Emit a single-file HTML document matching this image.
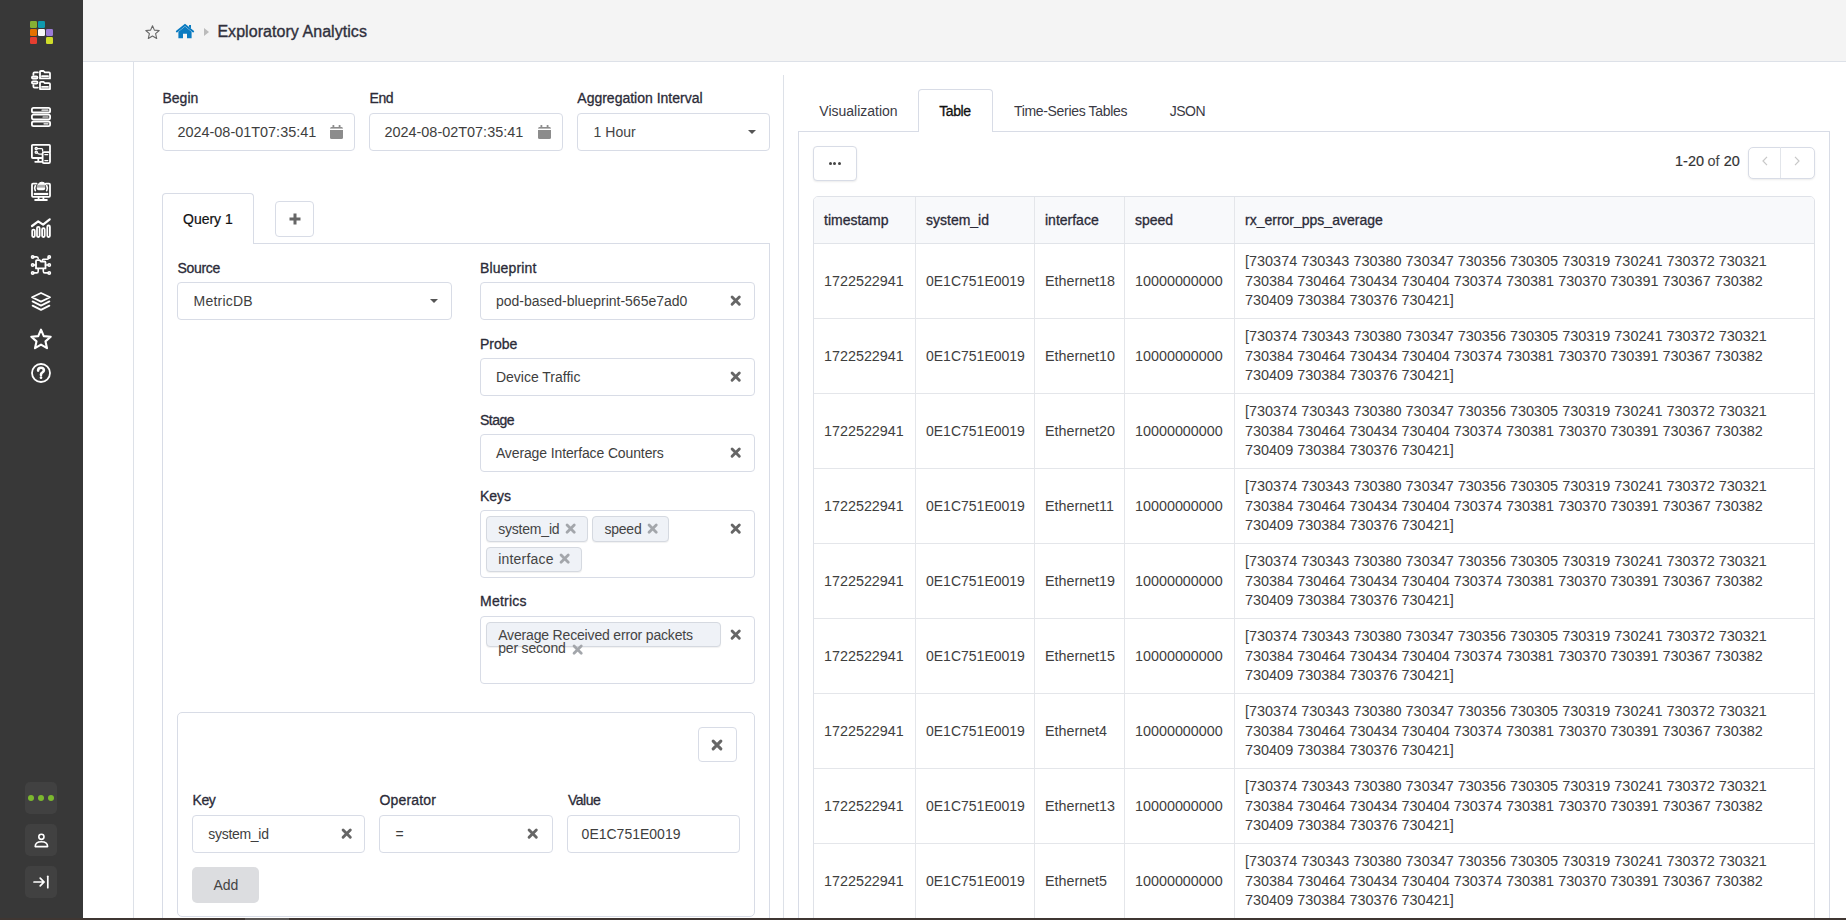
<!DOCTYPE html>
<html><head><meta charset="utf-8"><style>
*{box-sizing:border-box;margin:0;padding:0}
html,body{width:1846px;height:920px;overflow:hidden;background:#fff;font-family:"Liberation Sans",sans-serif;font-size:14px;color:#333}
.a{position:absolute}
.t{position:absolute;white-space:nowrap;line-height:14px;font-size:14px;color:#3e3e3e}
.lb{position:absolute;white-space:nowrap;line-height:14px;font-size:14px;color:#2b2b38;-webkit-text-stroke:0.3px #2b2b38}
.bx{position:absolute;border:1px solid #d8dce6;border-radius:4px;background:#fff}
.tag{position:absolute;border:1px solid #d5d9e0;border-radius:4px;background:#eff2f7;box-shadow:0 1px 1px rgba(0,0,0,0.06)}
svg{position:absolute;overflow:visible}
</style></head><body>
<div class="a" style="left:0px;top:0px;width:83px;height:918px;background:#383838;"></div>
<div class="a" style="left:30px;top:21px;width:7px;height:7px;background:#86b034;border-radius:1.2px"></div>
<div class="a" style="left:38px;top:21px;width:7px;height:7px;background:#0f9aae;border-radius:1.2px"></div>
<div class="a" style="left:30px;top:29px;width:7px;height:7px;background:#e57200;border-radius:1.2px"></div>
<div class="a" style="left:38px;top:29px;width:7px;height:7px;background:#f8f8f8;border-radius:1.2px"></div>
<div class="a" style="left:46px;top:29px;width:7px;height:7px;background:#9b7bd6;border-radius:1.2px"></div>
<div class="a" style="left:30px;top:37px;width:7px;height:7px;background:#e53e30;border-radius:1.2px"></div>
<div class="a" style="left:46px;top:37px;width:7px;height:7px;background:#cfdc2a;border-radius:1.2px"></div>
<svg style="left:31px;top:70px" width="20" height="20" viewBox="0 0 20 20" fill="none" stroke="#fff" stroke-width="1.8" stroke-linejoin="round" stroke-linecap="round"><path d="M9 8.4V1.9Q9 1 10 1H12.5L13.8 2.4H18Q19 2.4 19 3.4V8.4Z"/><path d="M9 19.1V12.6Q9 11.8 10 11.8H12.5L13.8 13.1H18Q19 13.1 19 14.1V19.1Z"/><path d="M11 6.2H17"/><path d="M11 16.9H17"/><rect x="0.9" y="6.5" width="5.6" height="2.2" rx="1.1"/><rect x="0.9" y="11.4" width="5.6" height="2.2" rx="1.1"/><path d="M2.4 4.8V3.5Q2.4 2.4 3.5 2.4H6.8"/><path d="M2.4 15.2V16.5Q2.4 17.6 3.5 17.6H6.8"/></svg>
<svg style="left:31px;top:107px" width="20" height="20" viewBox="0 0 20 20" fill="none" stroke="#fff" stroke-width="1.8" stroke-linejoin="round" stroke-linecap="round"><rect x="0.9" y="0.9" width="18.2" height="4.6" rx="1.6"/><rect x="0.9" y="7.7" width="18.2" height="4.6" rx="1.6"/><rect x="0.9" y="14.5" width="18.2" height="4.6" rx="1.6"/><path d="M11 3.2H17M12 10H17M13 16.8H17" stroke-width="1.2"/></svg>
<svg style="left:31px;top:144px" width="20" height="20" viewBox="0 0 20 20" fill="none" stroke="#fff" stroke-width="1.8" stroke-linejoin="round" stroke-linecap="round"><path d="M10.5 14H1.8Q0.9 14 0.9 13.1V1.8Q0.9 0.9 1.8 0.9H18.1Q19 0.9 19 1.8V8"/><path d="M4.2 17.8H10.5M7.3 14.5V17.5"/><rect x="11.6" y="8.2" width="7.4" height="10.9" rx="1.3"/><path d="M13.8 10.6H16.8M13.8 16.6H16.8" stroke-width="1.2"/><circle cx="5.2" cy="4.6" r="1.1" stroke-width="1.3"/><circle cx="5.2" cy="8.3" r="1.1" stroke-width="1.3"/><path d="M6.3 4.6H10.6Q11.6 4.6 11.6 5.6V7M6.3 8.3Q6.8 10.2 8.6 10.2H11" stroke-width="1.3"/></svg>
<svg style="left:31px;top:181px" width="20" height="20" viewBox="0 0 20 20" fill="none" stroke="#fff" stroke-width="1.8" stroke-linejoin="round" stroke-linecap="round"><path d="M5.6 2.7H2Q1 2.7 1 3.7V14.8Q1 15.8 2 15.8H18Q19 15.8 19 14.8V3.7Q19 2.7 18 2.7H14.8"/><path d="M4.2 19.1H15.8" stroke-width="2"/><path d="M7.6 16V18.8M12.4 16V18.8" stroke-width="1.8"/><rect x="2.8" y="11.9" width="14.4" height="2.2" fill="#fff" stroke="none"/><path d="M7 3.4Q10.9 -1.4 14.9 3.4Z" fill="#fff" stroke-width="1"/><path d="M5.8 4.4H14.2V7.4Q14.2 9.2 12.4 9.2H7.6Q5.8 9.2 5.8 7.4Z" fill="#fff" stroke="none"/><path d="M6.2 5.9H13.8" stroke="#383838" stroke-width="0.7"/><path d="M4.3 4.8Q2.9 7.2 4.3 9.6M15.7 4.8Q17.1 7.2 15.7 9.6" stroke-width="1.7"/></svg>
<svg style="left:31px;top:218px" width="20" height="20" viewBox="0 0 20 20" fill="none" stroke="#fff" stroke-width="1.8" stroke-linejoin="round" stroke-linecap="round"><path d="M1 8L7.2 3.4L12.1 6.6L18.7 1.3" stroke-width="2.2"/><rect x="1.2" y="11.6" width="2.6" height="7.4" rx="1.2"/><rect x="6" y="8.8" width="2.6" height="10.2" rx="1.2"/><rect x="11.1" y="10.2" width="2.6" height="8.8" rx="1.2"/><rect x="16.3" y="7.5" width="2.6" height="11.5" rx="1.2"/></svg>
<svg style="left:31px;top:255px" width="20" height="20" viewBox="0 0 20 20" fill="none" stroke="#fff" stroke-width="1.8" stroke-linejoin="round" stroke-linecap="round"><path d="M5 13.4V6.1Q5 5.2 5.9 5.2H8.6L10 6.5H13.6Q14.5 6.5 14.5 7.4V13.4Z"/><circle cx="1.7" cy="1.9" r="1.2" stroke-width="1.6"/><circle cx="1.7" cy="10" r="1.2" stroke-width="1.6"/><circle cx="1.7" cy="17.9" r="1.2" stroke-width="1.6"/><circle cx="18.2" cy="1.9" r="1.2" stroke-width="1.6"/><circle cx="18.2" cy="10" r="1.2" stroke-width="1.6"/><circle cx="18.2" cy="17.9" r="1.2" stroke-width="1.6"/><path d="M2.5 1.9H5.6Q7.2 1.9 7.2 3.6M2.5 10H5M14.5 10H17.4M17.4 2.5V3.6Q17.4 4.2 16.5 4.2H12.3Q11.4 4.2 11.4 5.2M2.5 17.9H5.6Q7.2 17.9 7.2 16.2V14M12.3 14V16.2Q12.3 17.9 13.9 17.9H17.4" stroke-width="1.6"/></svg>
<svg style="left:31px;top:292px" width="20" height="20" viewBox="0 0 20 20" fill="none" stroke="#fff" stroke-width="1.8" stroke-linejoin="round" stroke-linecap="round"><path d="M10 1L19 5.3L10 9.6L1 5.3Z"/><path d="M1.6 9.4L10 13.6L18.4 9.4"/><path d="M1.6 13.6L10 17.9L18.4 13.6"/></svg>
<svg style="left:31px;top:329px" width="20" height="20" viewBox="0 0 20 20" fill="none" stroke="#fff" stroke-width="1.8" stroke-linejoin="round" stroke-linecap="round"><path d="M10.00 0.70L12.76 7.10L19.70 7.75L14.47 12.35L16.00 19.15L10.00 15.60L4.00 19.15L5.53 12.35L0.30 7.75L7.24 7.10Z" stroke-width="2.1"/></svg>
<svg style="left:31px;top:363px" width="20" height="20" viewBox="0 0 20 20" fill="none" stroke="#fff" stroke-width="1.8" stroke-linejoin="round" stroke-linecap="round"><circle cx="10" cy="10" r="9" stroke-width="1.8"/><path d="M7.1 7.6Q7.1 4.8 10 4.8Q12.9 4.8 12.9 7.3Q12.9 8.8 11.2 9.6Q10 10.2 10 11.6V12" stroke-width="2.6"/><circle cx="10" cy="14.7" r="1.35" fill="#fff" stroke="none"/></svg>
<div class="a" style="left:25px;top:782px;width:32px;height:32px;background:#414141;border-radius:5px"></div>
<div class="a" style="left:25px;top:824px;width:32px;height:32px;background:#414141;border-radius:5px"></div>
<div class="a" style="left:25px;top:866px;width:32px;height:32px;background:#414141;border-radius:5px"></div>
<div class="a" style="left:28px;top:795px;width:6px;height:6px;border-radius:50%;background:#7cb82f"></div>
<div class="a" style="left:38px;top:795px;width:6px;height:6px;border-radius:50%;background:#7cb82f"></div>
<div class="a" style="left:48px;top:795px;width:6px;height:6px;border-radius:50%;background:#7cb82f"></div>
<svg style="left:33px;top:832px" width="16" height="16" viewBox="0 0 16 16" fill="none" stroke="#fff" stroke-width="1.6"><circle cx="8.4" cy="4.8" r="2.6"/><path d="M2.2 14.6Q2.2 9.8 8.4 9.8Q14.6 9.8 14.6 14.6Z" stroke-linejoin="round"/></svg>
<svg style="left:33px;top:874px" width="16" height="16" viewBox="0 0 16 16" fill="none" stroke="#fff" stroke-width="1.7" stroke-linecap="round"><path d="M1 8H11M7.2 4.2L11 8L7.2 11.8"/><path d="M14.8 2.3V13.7"/></svg>
<div class="a" style="left:83px;top:0px;width:1763px;height:61px;background:#f4f4f4;"></div>
<div class="a" style="left:83px;top:61px;width:1763px;height:1px;background:#dde1e8;"></div>
<svg style="left:145px;top:24.5px" width="15" height="15" viewBox="0 0 15 15" fill="none" stroke="#666" stroke-width="1.1" stroke-linejoin="round"><path d="M7.5 0.8L9.4 5.1L14.2 5.5L10.6 8.7L11.7 13.5L7.5 11L3.3 13.5L4.4 8.7L0.8 5.5L5.6 5.1Z"/></svg>
<svg style="left:175.5px;top:23.5px" width="18" height="15" viewBox="0 0 18 15"><path d="M0.8 7.4L9 0.9L17.2 7.4" fill="none" stroke="#0a7bc1" stroke-width="1.9" stroke-linecap="round"/><path d="M13 1.1H15V4.6L13 3Z" fill="#0a7bc1"/><path d="M2.4 7.8L9 2.6L15.6 7.8V14.3H11V9.8H7V14.3H2.4Z" fill="#0a7bc1"/></svg>
<svg style="left:204px;top:27.7px" width="5" height="8" viewBox="0 0 5 8"><path d="M0 0L5 4L0 8Z" fill="#bbb"/></svg>
<div class="t" style="left:217.4px;top:24.06px;font-size:16px;line-height:16px;color:#30303c;-webkit-text-stroke:0.35px #30303c;letter-spacing:0.05px">Exploratory Analytics</div>
<div class="a" style="left:133px;top:62px;width:1px;height:856px;background:#dde1e8;"></div>
<div class="lb" style="left:162.5px;top:91.35px;font-size:14px;line-height:14px;">Begin</div>
<div class="lb" style="left:369.5px;top:91.35px;font-size:14px;line-height:14px;letter-spacing:-0.4px">End</div>
<div class="lb" style="left:577.3px;top:91.35px;font-size:14px;line-height:14px;">Aggregation Interval</div>
<div class="bx" style="left:162px;top:113px;width:193px;height:38px;"></div>
<div class="bx" style="left:369px;top:113px;width:194px;height:38px;"></div>
<div class="bx" style="left:577px;top:113px;width:193px;height:38px;"></div>
<div class="t" style="left:177.4px;top:124.57px;font-size:14.45px;line-height:14.45px;">2024-08-01T07:35:41</div>
<div class="t" style="left:384.4px;top:124.57px;font-size:14.45px;line-height:14.45px;">2024-08-02T07:35:41</div>
<div class="t" style="left:593.6px;top:124.95px;font-size:14px;line-height:14px;color:#444;">1 Hour</div>
<svg style="left:330px;top:125px" width="13" height="14" viewBox="0 0 13 14"><rect x="0" y="2" width="13" height="12" rx="1.5" fill="#8c8c8c"/><rect x="2.5" y="0" width="1.8" height="3.5" rx="0.6" fill="#8c8c8c"/><rect x="8.7" y="0" width="1.8" height="3.5" rx="0.6" fill="#8c8c8c"/><rect x="0" y="3.6" width="13" height="1.4" fill="#fff"/></svg>
<svg style="left:537.5px;top:125px" width="13" height="14" viewBox="0 0 13 14"><rect x="0" y="2" width="13" height="12" rx="1.5" fill="#8c8c8c"/><rect x="2.5" y="0" width="1.8" height="3.5" rx="0.6" fill="#8c8c8c"/><rect x="8.7" y="0" width="1.8" height="3.5" rx="0.6" fill="#8c8c8c"/><rect x="0" y="3.6" width="13" height="1.4" fill="#fff"/></svg>
<svg style="left:747.5px;top:129.8px" width="8" height="4" viewBox="0 0 8 4"><path d="M0 0H8L4 4Z" fill="#555"/></svg>
<div class="a" style="left:783px;top:75px;width:1px;height:843px;background:#dde1e8;"></div>
<div class="a" style="left:162px;top:193px;width:92px;height:51px;border:1px solid #d8dce6;border-bottom:none;border-radius:4px 4px 0 0;background:#fff;z-index:2"></div>
<div class="t" style="left:183px;top:212.05px;font-size:14px;line-height:14px;color:#111;z-index:3;-webkit-text-stroke:0.2px #111">Query 1</div>
<div class="bx" style="left:275px;top:201px;width:39px;height:36px;"></div>
<svg style="left:288.5px;top:212.5px" width="12" height="12" viewBox="0 0 12 12"><path d="M6 0.5V11.5M0.5 6H11.5" stroke="#666" stroke-width="3"/></svg>
<div class="a" style="left:162px;top:243px;width:608px;height:700px;border:1px solid #d8dce6;background:#fff;z-index:1"></div>
<div class="lb" style="left:177.5px;top:260.95px;font-size:14px;line-height:14px;z-index:5;letter-spacing:-0.33px;">Source</div>
<div class="lb" style="left:480px;top:260.95px;font-size:14px;line-height:14px;z-index:5;letter-spacing:0.13px;">Blueprint</div>
<div class="bx" style="left:177px;top:282px;width:275px;height:38px;z-index:4;"></div>
<div class="bx" style="left:480px;top:282px;width:275px;height:38px;z-index:4;"></div>
<div class="t" style="left:193.6px;top:294.15px;font-size:14px;line-height:14px;z-index:5;letter-spacing:0.2px">MetricDB</div>
<svg style="left:430px;top:299px;z-index:6" width="8" height="4" viewBox="0 0 8 4"><path d="M0 0H8L4 4Z" fill="#555"/></svg>
<div class="t" style="left:495.9px;top:294.15px;font-size:14px;line-height:14px;z-index:5;">pod-based-blueprint-565e7ad0</div>
<svg style="left:731.3px;top:295.7px;z-index:6" width="9.4" height="9.4" viewBox="0 0 9.4 9.4"><path d="M1.0875 1.0875L8.3125 8.3125M8.3125 1.0875L1.0875 8.3125" stroke="#666" stroke-width="2.9" stroke-linecap="round"/></svg>
<div class="lb" style="left:480px;top:337.15px;font-size:14px;line-height:14px;z-index:5;letter-spacing:0px;">Probe</div>
<div class="bx" style="left:480px;top:358px;width:275px;height:38px;z-index:4;"></div>
<div class="t" style="left:495.9px;top:370.15px;font-size:14px;line-height:14px;z-index:5;">Device Traffic</div>
<svg style="left:731.3px;top:371.7px;z-index:6" width="9.4" height="9.4" viewBox="0 0 9.4 9.4"><path d="M1.0875 1.0875L8.3125 8.3125M8.3125 1.0875L1.0875 8.3125" stroke="#666" stroke-width="2.9" stroke-linecap="round"/></svg>
<div class="lb" style="left:480px;top:413.15px;font-size:14px;line-height:14px;z-index:5;letter-spacing:-0.5px;">Stage</div>
<div class="bx" style="left:480px;top:434px;width:275px;height:38px;z-index:4;"></div>
<div class="t" style="left:495.9px;top:446.15px;font-size:14px;line-height:14px;z-index:5;letter-spacing:-0.12px">Average Interface Counters</div>
<svg style="left:731.3px;top:447.7px;z-index:6" width="9.4" height="9.4" viewBox="0 0 9.4 9.4"><path d="M1.0875 1.0875L8.3125 8.3125M8.3125 1.0875L1.0875 8.3125" stroke="#666" stroke-width="2.9" stroke-linecap="round"/></svg>
<div class="lb" style="left:480px;top:489.15px;font-size:14px;line-height:14px;z-index:5;letter-spacing:0px;">Keys</div>
<div class="bx" style="left:480px;top:510px;width:275px;height:67.5px;z-index:4;"></div>
<div class="tag" style="left:486px;top:516px;width:101.5px;height:25.5px;z-index:5"></div>
<div class="t" style="left:498.2px;top:521.65px;font-size:14px;line-height:14px;color:#444;z-index:5;letter-spacing:-0.2px">system_id</div>
<svg style="left:566.45px;top:524.35px;z-index:6" width="9.3" height="9.3" viewBox="0 0 9.3 9.3"><path d="M1.0499999999999998 1.0499999999999998L8.25 8.25M8.25 1.0499999999999998L1.0499999999999998 8.25" stroke="#a3a6ab" stroke-width="2.8" stroke-linecap="round"/></svg>
<div class="tag" style="left:592px;top:516px;width:76.5px;height:25.5px;z-index:5"></div>
<div class="t" style="left:604.4px;top:521.65px;font-size:14px;line-height:14px;color:#444;z-index:5;letter-spacing:-0.2px">speed</div>
<svg style="left:647.75px;top:524.35px;z-index:6" width="9.3" height="9.3" viewBox="0 0 9.3 9.3"><path d="M1.0499999999999998 1.0499999999999998L8.25 8.25M8.25 1.0499999999999998L1.0499999999999998 8.25" stroke="#a3a6ab" stroke-width="2.8" stroke-linecap="round"/></svg>
<div class="tag" style="left:486px;top:546.5px;width:95.5px;height:25px;z-index:5"></div>
<div class="t" style="left:498.2px;top:551.65px;font-size:14px;line-height:14px;color:#444;z-index:5;letter-spacing:0.2px">interface</div>
<svg style="left:560.15px;top:554.35px;z-index:6" width="9.3" height="9.3" viewBox="0 0 9.3 9.3"><path d="M1.0499999999999998 1.0499999999999998L8.25 8.25M8.25 1.0499999999999998L1.0499999999999998 8.25" stroke="#a3a6ab" stroke-width="2.8" stroke-linecap="round"/></svg>
<svg style="left:731.3px;top:523.6999999999999px;z-index:6" width="9.4" height="9.4" viewBox="0 0 9.4 9.4"><path d="M1.0875 1.0875L8.3125 8.3125M8.3125 1.0875L1.0875 8.3125" stroke="#666" stroke-width="2.9" stroke-linecap="round"/></svg>
<div class="lb" style="left:480px;top:593.85px;font-size:14px;line-height:14px;z-index:5;letter-spacing:0.25px;">Metrics</div>
<div class="bx" style="left:480px;top:616px;width:275px;height:67.5px;z-index:4;"></div>
<div class="tag" style="left:486px;top:622px;width:234.5px;height:25px;z-index:5"></div>
<div class="t" style="left:498.2px;top:627.85px;font-size:14px;line-height:14px;color:#444;z-index:5;letter-spacing:-0.17px">Average Received error packets</div>
<div class="t" style="left:498.2px;top:641.45px;font-size:14px;line-height:14px;color:#444;z-index:5;letter-spacing:-0.18px">per second</div>
<svg style="left:572.75px;top:644.75px;z-index:6" width="9.3" height="9.3" viewBox="0 0 9.3 9.3"><path d="M1.0499999999999998 1.0499999999999998L8.25 8.25M8.25 1.0499999999999998L1.0499999999999998 8.25" stroke="#a3a6ab" stroke-width="2.8" stroke-linecap="round"/></svg>
<svg style="left:731.3px;top:629.9px;z-index:6" width="9.4" height="9.4" viewBox="0 0 9.4 9.4"><path d="M1.0875 1.0875L8.3125 8.3125M8.3125 1.0875L1.0875 8.3125" stroke="#666" stroke-width="2.9" stroke-linecap="round"/></svg>
<div class="bx" style="left:177px;top:712px;width:578px;height:205px;z-index:4;border-radius:5px"></div>
<div class="bx" style="left:698px;top:727px;width:39px;height:35px;z-index:4;"></div>
<svg style="left:712.1px;top:739.7px;z-index:6" width="10" height="10" viewBox="0 0 10 10"><path d="M1.1625 1.1625L8.8375 8.8375M8.8375 1.1625L1.1625 8.8375" stroke="#666" stroke-width="3.1" stroke-linecap="round"/></svg>
<div class="lb" style="left:192.5px;top:793.25px;font-size:14px;line-height:14px;z-index:5;letter-spacing:-0.4px;">Key</div>
<div class="lb" style="left:379.5px;top:793.25px;font-size:14px;line-height:14px;z-index:5;letter-spacing:0.15px;">Operator</div>
<div class="lb" style="left:568px;top:793.25px;font-size:14px;line-height:14px;z-index:5;letter-spacing:-0.5px;">Value</div>
<div class="bx" style="left:192px;top:815px;width:173px;height:38px;z-index:4;"></div>
<div class="bx" style="left:379px;top:815px;width:174px;height:38px;z-index:4;"></div>
<div class="bx" style="left:567px;top:815px;width:173px;height:38px;z-index:4;"></div>
<div class="t" style="left:208.3px;top:826.95px;font-size:14px;line-height:14px;z-index:5;letter-spacing:-0.3px">system_id</div>
<svg style="left:341.6px;top:828.8px;z-index:6" width="9.4" height="9.4" viewBox="0 0 9.4 9.4"><path d="M1.0875 1.0875L8.3125 8.3125M8.3125 1.0875L1.0875 8.3125" stroke="#666" stroke-width="2.9" stroke-linecap="round"/></svg>
<div class="t" style="left:395.5px;top:826.95px;font-size:14px;line-height:14px;z-index:5;">=</div>
<svg style="left:528.3px;top:828.8px;z-index:6" width="9.4" height="9.4" viewBox="0 0 9.4 9.4"><path d="M1.0875 1.0875L8.3125 8.3125M8.3125 1.0875L1.0875 8.3125" stroke="#666" stroke-width="2.9" stroke-linecap="round"/></svg>
<div class="t" style="left:581.6px;top:826.95px;font-size:14px;line-height:14px;z-index:5;">0E1C751E0019</div>
<div class="a" style="left:192px;top:867px;width:67px;height:36px;background:#dcdde0;border-radius:5px;z-index:5"></div>
<div class="t" style="left:213.4px;top:878.15px;font-size:14px;line-height:14px;color:#444;z-index:5;">Add</div>
<div class="a" style="left:0px;top:918px;width:1846px;height:2px;background:#3f3632;z-index:20;"></div>
<div class="a" style="left:245px;top:918px;width:44px;height:2px;background:#5b5755;z-index:21;"></div>
<div class="a" style="left:798px;top:131px;width:1032px;height:800px;border:1px solid #d8dce6;background:#fff;z-index:1"></div>
<div class="a" style="left:918px;top:89px;width:75px;height:43px;border:1px solid #d8dce6;border-bottom:none;border-radius:4px 4px 0 0;background:#fff;z-index:2"></div>
<div class="t" style="left:819.3px;top:104.05px;font-size:14px;line-height:14px;color:#3a3a44;">Visualization</div>
<div class="t" style="left:939.3px;top:104.05px;font-size:14px;line-height:14px;color:#111;z-index:3;-webkit-text-stroke:0.3px #111;letter-spacing:-0.45px">Table</div>
<div class="t" style="left:1014px;top:104.05px;font-size:14px;line-height:14px;color:#3a3a44;letter-spacing:-0.33px">Time-Series Tables</div>
<div class="t" style="left:1169.7px;top:104.05px;font-size:14px;line-height:14px;color:#3a3a44;letter-spacing:-0.5px">JSON</div>
<div class="bx" style="left:813px;top:146px;width:44px;height:35px;z-index:4;box-shadow:0 1px 2px rgba(0,0,0,0.08)"></div>
<div class="a" style="left:828.6px;top:161.9px;width:3.2px;height:3.2px;border-radius:50%;background:#444;z-index:5"></div>
<div class="a" style="left:833.1999999999999px;top:161.9px;width:3.2px;height:3.2px;border-radius:50%;background:#444;z-index:5"></div>
<div class="a" style="left:837.8px;top:161.9px;width:3.2px;height:3.2px;border-radius:50%;background:#444;z-index:5"></div>
<div class="t" style="left:1675.1px;top:153.77px;font-size:14.45px;line-height:14.45px;color:#333;z-index:5;-webkit-text-stroke:0.2px #333">1-20</div>
<div class="t" style="left:1707.6px;top:153.77px;font-size:14.45px;line-height:14.45px;color:#444;z-index:5">of</div>
<div class="t" style="left:1723.7px;top:153.77px;font-size:14.45px;line-height:14.45px;color:#333;z-index:5;-webkit-text-stroke:0.2px #333">20</div>
<div class="bx" style="left:1747.5px;top:146.5px;width:67px;height:32px;z-index:4;border-radius:5px;box-shadow:0 1px 2px rgba(0,0,0,0.08)"></div>
<div class="a" style="left:1780px;top:147px;width:1px;height:31px;background:#e2e5ea;z-index:5;"></div>
<svg style="left:1761.5px;top:156.2px;z-index:6" width="6" height="10" viewBox="0 0 6 10"><path d="M5 0.8L1 5L5 9.2" fill="none" stroke="#c8c8c8" stroke-width="1.2"/></svg>
<svg style="left:1793.5px;top:156.2px;z-index:6" width="6" height="10" viewBox="0 0 6 10"><path d="M1 0.8L5 5L1 9.2" fill="none" stroke="#c8c8c8" stroke-width="1.2"/></svg>
<div class="a" style="left:813px;top:196px;width:1002px;height:760px;border:1px solid #dfe2e8;border-radius:5px 5px 0 0;background:#fff;z-index:4"></div>
<div class="a" style="left:814px;top:197px;width:1000px;height:46px;background:#f8f9fb;border-radius:4px 4px 0 0;z-index:5"></div>
<div class="a" style="left:915px;top:197px;width:1px;height:760px;background:#e4e6ea;z-index:6;"></div>
<div class="a" style="left:1034px;top:197px;width:1px;height:760px;background:#e4e6ea;z-index:6;"></div>
<div class="a" style="left:1124px;top:197px;width:1px;height:760px;background:#e4e6ea;z-index:6;"></div>
<div class="a" style="left:1234px;top:197px;width:1px;height:760px;background:#e4e6ea;z-index:6;"></div>
<div class="a" style="left:814px;top:243px;width:1000px;height:1px;background:#e1e4e9;z-index:6;"></div>
<div class="t" style="left:824px;top:213.15px;font-size:14px;line-height:14px;color:#2b2b38;z-index:7;-webkit-text-stroke:0.3px #2b2b38">timestamp</div>
<div class="t" style="left:926px;top:213.15px;font-size:14px;line-height:14px;color:#2b2b38;z-index:7;-webkit-text-stroke:0.3px #2b2b38">system_id</div>
<div class="t" style="left:1045px;top:213.15px;font-size:14px;line-height:14px;color:#2b2b38;z-index:7;-webkit-text-stroke:0.3px #2b2b38">interface</div>
<div class="t" style="left:1135px;top:213.15px;font-size:14px;line-height:14px;color:#2b2b38;z-index:7;-webkit-text-stroke:0.3px #2b2b38">speed</div>
<div class="t" style="left:1245px;top:213.15px;font-size:14px;line-height:14px;color:#2b2b38;z-index:7;-webkit-text-stroke:0.3px #2b2b38">rx_error_pps_average</div>
<div class="t" style="left:824px;top:273.85px;font-size:14.35px;line-height:14.35px;z-index:7">1722522941</div>
<div class="t" style="left:926px;top:274.15px;font-size:14px;line-height:14px;z-index:7">0E1C751E0019</div>
<div class="t" style="left:1045px;top:273.90px;font-size:14.3px;line-height:14.3px;z-index:7">Ethernet18</div>
<div class="t" style="left:1135px;top:273.85px;font-size:14.35px;line-height:14.35px;z-index:7">10000000000</div>
<div class="t" style="left:1245px;top:253.87px;font-size:14.45px;line-height:14.45px;z-index:7">[730374 730343 730380 730347 730356 730305 730319 730241 730372 730321</div>
<div class="t" style="left:1245px;top:273.77px;font-size:14.45px;line-height:14.45px;z-index:7">730384 730464 730434 730404 730374 730381 730370 730391 730367 730382</div>
<div class="t" style="left:1245px;top:293.47px;font-size:14.45px;line-height:14.45px;z-index:7">730409 730384 730376 730421]</div>
<div class="a" style="left:814px;top:318px;width:1000px;height:1px;background:#e4e6ea;z-index:6;"></div>
<div class="t" style="left:824px;top:348.85px;font-size:14.35px;line-height:14.35px;z-index:7">1722522941</div>
<div class="t" style="left:926px;top:349.15px;font-size:14px;line-height:14px;z-index:7">0E1C751E0019</div>
<div class="t" style="left:1045px;top:348.90px;font-size:14.3px;line-height:14.3px;z-index:7">Ethernet10</div>
<div class="t" style="left:1135px;top:348.85px;font-size:14.35px;line-height:14.35px;z-index:7">10000000000</div>
<div class="t" style="left:1245px;top:328.87px;font-size:14.45px;line-height:14.45px;z-index:7">[730374 730343 730380 730347 730356 730305 730319 730241 730372 730321</div>
<div class="t" style="left:1245px;top:348.77px;font-size:14.45px;line-height:14.45px;z-index:7">730384 730464 730434 730404 730374 730381 730370 730391 730367 730382</div>
<div class="t" style="left:1245px;top:368.47px;font-size:14.45px;line-height:14.45px;z-index:7">730409 730384 730376 730421]</div>
<div class="a" style="left:814px;top:393px;width:1000px;height:1px;background:#e4e6ea;z-index:6;"></div>
<div class="t" style="left:824px;top:423.85px;font-size:14.35px;line-height:14.35px;z-index:7">1722522941</div>
<div class="t" style="left:926px;top:424.15px;font-size:14px;line-height:14px;z-index:7">0E1C751E0019</div>
<div class="t" style="left:1045px;top:423.90px;font-size:14.3px;line-height:14.3px;z-index:7">Ethernet20</div>
<div class="t" style="left:1135px;top:423.85px;font-size:14.35px;line-height:14.35px;z-index:7">10000000000</div>
<div class="t" style="left:1245px;top:403.87px;font-size:14.45px;line-height:14.45px;z-index:7">[730374 730343 730380 730347 730356 730305 730319 730241 730372 730321</div>
<div class="t" style="left:1245px;top:423.77px;font-size:14.45px;line-height:14.45px;z-index:7">730384 730464 730434 730404 730374 730381 730370 730391 730367 730382</div>
<div class="t" style="left:1245px;top:443.47px;font-size:14.45px;line-height:14.45px;z-index:7">730409 730384 730376 730421]</div>
<div class="a" style="left:814px;top:468px;width:1000px;height:1px;background:#e4e6ea;z-index:6;"></div>
<div class="t" style="left:824px;top:498.85px;font-size:14.35px;line-height:14.35px;z-index:7">1722522941</div>
<div class="t" style="left:926px;top:499.15px;font-size:14px;line-height:14px;z-index:7">0E1C751E0019</div>
<div class="t" style="left:1045px;top:498.90px;font-size:14.3px;line-height:14.3px;z-index:7">Ethernet11</div>
<div class="t" style="left:1135px;top:498.85px;font-size:14.35px;line-height:14.35px;z-index:7">10000000000</div>
<div class="t" style="left:1245px;top:478.87px;font-size:14.45px;line-height:14.45px;z-index:7">[730374 730343 730380 730347 730356 730305 730319 730241 730372 730321</div>
<div class="t" style="left:1245px;top:498.77px;font-size:14.45px;line-height:14.45px;z-index:7">730384 730464 730434 730404 730374 730381 730370 730391 730367 730382</div>
<div class="t" style="left:1245px;top:518.47px;font-size:14.45px;line-height:14.45px;z-index:7">730409 730384 730376 730421]</div>
<div class="a" style="left:814px;top:543px;width:1000px;height:1px;background:#e4e6ea;z-index:6;"></div>
<div class="t" style="left:824px;top:573.85px;font-size:14.35px;line-height:14.35px;z-index:7">1722522941</div>
<div class="t" style="left:926px;top:574.15px;font-size:14px;line-height:14px;z-index:7">0E1C751E0019</div>
<div class="t" style="left:1045px;top:573.90px;font-size:14.3px;line-height:14.3px;z-index:7">Ethernet19</div>
<div class="t" style="left:1135px;top:573.85px;font-size:14.35px;line-height:14.35px;z-index:7">10000000000</div>
<div class="t" style="left:1245px;top:553.87px;font-size:14.45px;line-height:14.45px;z-index:7">[730374 730343 730380 730347 730356 730305 730319 730241 730372 730321</div>
<div class="t" style="left:1245px;top:573.77px;font-size:14.45px;line-height:14.45px;z-index:7">730384 730464 730434 730404 730374 730381 730370 730391 730367 730382</div>
<div class="t" style="left:1245px;top:593.47px;font-size:14.45px;line-height:14.45px;z-index:7">730409 730384 730376 730421]</div>
<div class="a" style="left:814px;top:618px;width:1000px;height:1px;background:#e4e6ea;z-index:6;"></div>
<div class="t" style="left:824px;top:648.85px;font-size:14.35px;line-height:14.35px;z-index:7">1722522941</div>
<div class="t" style="left:926px;top:649.15px;font-size:14px;line-height:14px;z-index:7">0E1C751E0019</div>
<div class="t" style="left:1045px;top:648.90px;font-size:14.3px;line-height:14.3px;z-index:7">Ethernet15</div>
<div class="t" style="left:1135px;top:648.85px;font-size:14.35px;line-height:14.35px;z-index:7">10000000000</div>
<div class="t" style="left:1245px;top:628.87px;font-size:14.45px;line-height:14.45px;z-index:7">[730374 730343 730380 730347 730356 730305 730319 730241 730372 730321</div>
<div class="t" style="left:1245px;top:648.77px;font-size:14.45px;line-height:14.45px;z-index:7">730384 730464 730434 730404 730374 730381 730370 730391 730367 730382</div>
<div class="t" style="left:1245px;top:668.47px;font-size:14.45px;line-height:14.45px;z-index:7">730409 730384 730376 730421]</div>
<div class="a" style="left:814px;top:693px;width:1000px;height:1px;background:#e4e6ea;z-index:6;"></div>
<div class="t" style="left:824px;top:723.85px;font-size:14.35px;line-height:14.35px;z-index:7">1722522941</div>
<div class="t" style="left:926px;top:724.15px;font-size:14px;line-height:14px;z-index:7">0E1C751E0019</div>
<div class="t" style="left:1045px;top:723.90px;font-size:14.3px;line-height:14.3px;z-index:7">Ethernet4</div>
<div class="t" style="left:1135px;top:723.85px;font-size:14.35px;line-height:14.35px;z-index:7">10000000000</div>
<div class="t" style="left:1245px;top:703.87px;font-size:14.45px;line-height:14.45px;z-index:7">[730374 730343 730380 730347 730356 730305 730319 730241 730372 730321</div>
<div class="t" style="left:1245px;top:723.77px;font-size:14.45px;line-height:14.45px;z-index:7">730384 730464 730434 730404 730374 730381 730370 730391 730367 730382</div>
<div class="t" style="left:1245px;top:743.47px;font-size:14.45px;line-height:14.45px;z-index:7">730409 730384 730376 730421]</div>
<div class="a" style="left:814px;top:768px;width:1000px;height:1px;background:#e4e6ea;z-index:6;"></div>
<div class="t" style="left:824px;top:798.85px;font-size:14.35px;line-height:14.35px;z-index:7">1722522941</div>
<div class="t" style="left:926px;top:799.15px;font-size:14px;line-height:14px;z-index:7">0E1C751E0019</div>
<div class="t" style="left:1045px;top:798.90px;font-size:14.3px;line-height:14.3px;z-index:7">Ethernet13</div>
<div class="t" style="left:1135px;top:798.85px;font-size:14.35px;line-height:14.35px;z-index:7">10000000000</div>
<div class="t" style="left:1245px;top:778.87px;font-size:14.45px;line-height:14.45px;z-index:7">[730374 730343 730380 730347 730356 730305 730319 730241 730372 730321</div>
<div class="t" style="left:1245px;top:798.77px;font-size:14.45px;line-height:14.45px;z-index:7">730384 730464 730434 730404 730374 730381 730370 730391 730367 730382</div>
<div class="t" style="left:1245px;top:818.47px;font-size:14.45px;line-height:14.45px;z-index:7">730409 730384 730376 730421]</div>
<div class="a" style="left:814px;top:843px;width:1000px;height:1px;background:#e4e6ea;z-index:6;"></div>
<div class="t" style="left:824px;top:873.85px;font-size:14.35px;line-height:14.35px;z-index:7">1722522941</div>
<div class="t" style="left:926px;top:874.15px;font-size:14px;line-height:14px;z-index:7">0E1C751E0019</div>
<div class="t" style="left:1045px;top:873.90px;font-size:14.3px;line-height:14.3px;z-index:7">Ethernet5</div>
<div class="t" style="left:1135px;top:873.85px;font-size:14.35px;line-height:14.35px;z-index:7">10000000000</div>
<div class="t" style="left:1245px;top:853.87px;font-size:14.45px;line-height:14.45px;z-index:7">[730374 730343 730380 730347 730356 730305 730319 730241 730372 730321</div>
<div class="t" style="left:1245px;top:873.77px;font-size:14.45px;line-height:14.45px;z-index:7">730384 730464 730434 730404 730374 730381 730370 730391 730367 730382</div>
<div class="t" style="left:1245px;top:893.47px;font-size:14.45px;line-height:14.45px;z-index:7">730409 730384 730376 730421]</div>
</body></html>
